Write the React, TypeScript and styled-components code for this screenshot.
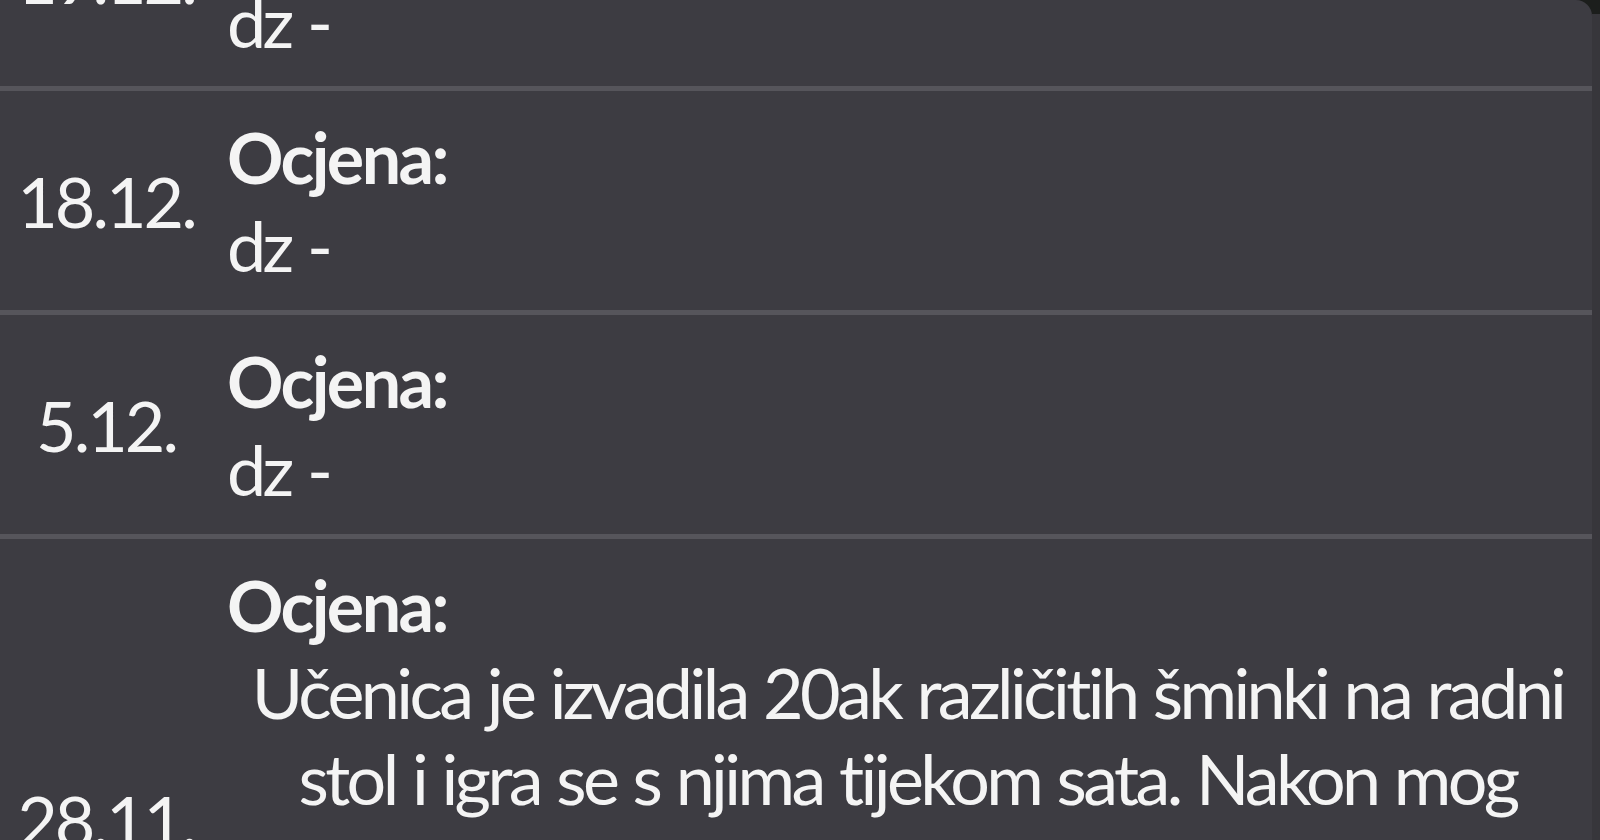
import React from "react";
import styled, { createGlobalStyle } from "styled-components";

const Global = createGlobalStyle`
  html, body { margin: 0; padding: 0; background: #1c1e1c; overflow: hidden; }
  body { font-family: Lato, "Noto Sans", sans-serif; font-variant-ligatures: none; }
`;

const Screen = styled.div`
  width: 1600px;
  height: 840px;
  overflow: hidden;
  display: flex;
  background: #1c1e1c;
`;

const Panel = styled.div`
  width: 1592px;
  height: 840px;
  overflow: hidden;
  background: #3d3c42;
  border-top-right-radius: 16px;
`;

const Edge = styled.div`
  width: 8px;
  height: 840px;
  background: #37363b;
  margin-top: 14px;
`;

const List = styled.div`
  margin-top: -133px;
  display: flex;
  flex-direction: column;
`;

const Row = styled.div`
  display: grid;
  grid-template-columns: 212px 1fr;
  column-gap: 15px;
  align-items: center;
  padding: 22px 0 21px;
  border-bottom: 5px solid #56555b;
  color: #f4f4f4;
  font-size: 70px;
  line-height: 88px;
`;

const DateCell = styled.div`
  text-align: center;
  font-weight: 400;
  letter-spacing: -3px;
`;

const Body = styled.div`
  display: flex;
  flex-direction: column;
  padding-right: 4px;
`;

const Label = styled.div`
  font-weight: 700;
  letter-spacing: -2.6px;
`;

const Note = styled.div<{ $long?: boolean }>`
  font-weight: 400;
  letter-spacing: -3.6px;
  word-spacing: 2px;
  text-align: ${(p) => (p.$long ? "center" : "left")};
  line-height: ${(p) => (p.$long ? "86px" : "88px")};
`;

type Entry = { date: string; note: string; long?: boolean };

const entries: Entry[] = [
  { date: "19.12.", note: "dz -" },
  { date: "18.12.", note: "dz -" },
  { date: "5.12.", note: "dz -" },
  {
    date: "28.11.",
    note:
      "Učenica je izvadila 20ak različitih šminki na radni stol i igra se s njima tijekom sata. Nakon mog upozorenja da ih spremi u torbu, nastavila je s igranjem i nije sudjelovala u nastavi. Opomenuta je usmeno i upisana joj je bilješka u imenik.",
    long: true,
  },
];

export default function App() {
  return (
    <>
      <Global />
      <Screen>
        <Panel>
          <List>
            {entries.map((e) => (
              <Row key={e.date}>
                <DateCell>{e.date}</DateCell>
                <Body>
                  <Label>Ocjena:</Label>
                  <Note $long={e.long}>{e.note}</Note>
                </Body>
              </Row>
            ))}
          </List>
        </Panel>
        <Edge />
      </Screen>
    </>
  );
}
